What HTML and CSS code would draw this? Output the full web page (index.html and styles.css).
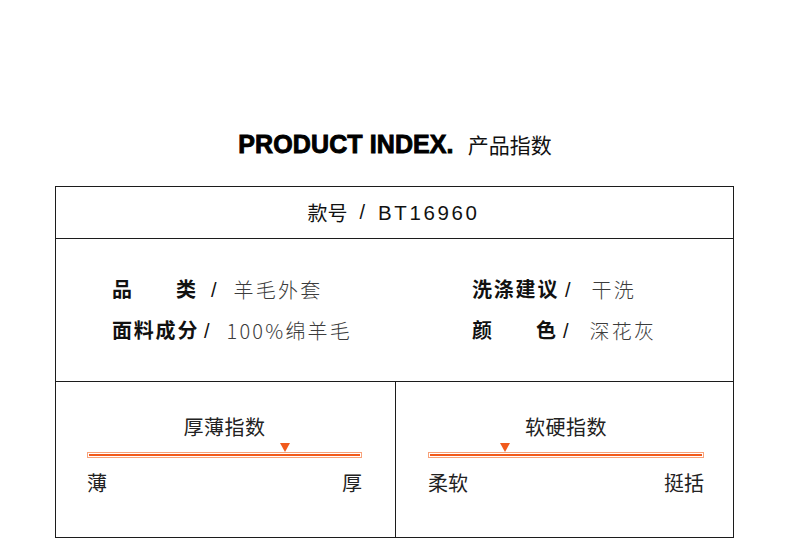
FILE: index.html
```html
<!DOCTYPE html>
<html lang="zh">
<head>
<meta charset="utf-8">
<title>Product Index</title>
<link rel="stylesheet" href="styles.css">
</head>
<body>
<div class="page">
  <h1 class="title">
    <span class="title-en">PRODUCT INDEX.</span>
    <span class="title-cn">产品指数</span>
  </h1>
  <div class="sheet">
    <div class="row-code">
      <span class="code-label">款号</span>
      <span class="code-slash">/</span>
      <span class="code-num">BT16960</span>
    </div>
    <div class="row-info">
      <div class="item item-shift">
        <span class="label spread"><span>品</span><span>类</span></span>
        <span class="slash">/</span>
        <span class="val">羊毛外套</span>
      </div>
      <div class="item item-right">
        <span class="label">洗涤建议</span>
        <span class="slash">/</span>
        <span class="val">干洗</span>
      </div>
      <div class="item">
        <span class="label">面料成分</span>
        <span class="slash">/</span>
        <span class="val">100%绵羊毛</span>
      </div>
      <div class="item item-right item-tight">
        <span class="label spread"><span>颜</span><span>色</span></span>
        <span class="slash">/</span>
        <span class="val">深花灰</span>
      </div>
    </div>
    <div class="row-gauges">
      <div class="panel panel-left">
        <div class="panel-title">厚薄指数</div>
        <div class="gauge">
          <div class="marker" style="left: 72%"></div>
          <div class="bar"><div class="bar-fill"></div></div>
        </div>
        <div class="ends"><span>薄</span><span>厚</span></div>
      </div>
      <div class="panel panel-right">
        <div class="panel-title">软硬指数</div>
        <div class="gauge">
          <div class="marker" style="left: 28%"></div>
          <div class="bar"><div class="bar-fill"></div></div>
        </div>
        <div class="ends"><span>柔软</span><span>挺括</span></div>
      </div>
    </div>
  </div>
</div>
</body>
</html>
```
FILE: styles.css
```css
* { box-sizing: border-box; }
html, body { margin: 0; padding: 0; background: #fff; }
body {
  font-family: "Liberation Sans", "Noto Sans CJK SC", sans-serif;
  color: #111;
  width: 790px;
}
.page { padding-top: 129px; }

.title {
  margin: 0 0 27px 0;
  height: 30px;
  line-height: 30px;
  display: flex;
  justify-content: center;
  align-items: baseline;
  gap: 14px;
  font-weight: normal;
}
.title-en {
  font-family: "Liberation Sans", sans-serif;
  font-weight: 700;
  font-size: 25px;
  -webkit-text-stroke: 0.9px #000;
  color: #000;
  letter-spacing: 0.1px;
}
.title-cn {
  font-family: "Noto Sans CJK SC", sans-serif;
  font-size: 21px;
  color: #111;
}

.sheet {
  margin-left: 55px;
  width: 679px;
  border: 1px solid #1c1c1c;
}

.row-code {
  height: 52px;
  border-bottom: 1px solid #1c1c1c;
  display: flex;
  align-items: center;
  justify-content: center;
  font-size: 20px;
  color: #111;
  padding-right: 2px;
}
.code-label { letter-spacing: 0; }
.code-slash { margin-left: 12px; }
.code-num { margin-left: 13px; letter-spacing: 2.6px; font-size: 20.5px; }

.row-info {
  height: 143px;
  border-bottom: 1px solid #1c1c1c;
  padding-left: 56px;
  display: grid;
  grid-template-columns: 360px 1fr;
  align-content: center;
  row-gap: 17px;
}
.item {
  display: flex;
  align-items: center;
  height: 24px;
  line-height: 24px;
  font-size: 20px;
}
.label {
  width: 86px;
  font-weight: 700;
  letter-spacing: 1.8px;
  color: #111;
  white-space: nowrap;
}
.label.spread {
  display: flex;
  justify-content: space-between;
  letter-spacing: 0;
  padding-right: 2px;
}
.slash {
  margin-left: 6px;
  font-family: "Liberation Sans", sans-serif;
  color: #111;
}
.val {
  margin-left: 17px;
  font-family: "Noto Sans CJK SC", sans-serif;
  font-weight: 300;
  color: #3c3c3c;
  letter-spacing: 2.2px;
}
.item-shift .slash { margin-left: 13px; }
.item-right .slash { margin-left: 7px; }
.item-right .val { margin-left: 21px; }
.item-tight .slash { margin-left: 5px; }

.row-gauges {
  height: 155px;
  display: grid;
  grid-template-columns: 340px 1fr;
}
.panel { display: flex; flex-direction: column; }
.panel-left { border-right: 1px solid #1c1c1c; padding: 0 33px 0 31px; }
.panel-right { padding: 0 29px 0 32px; }
.panel-title {
  margin-top: 34px;
  text-align: center;
  font-size: 20px;
  line-height: 24px;
  color: #222;
  letter-spacing: 0.5px;
}
.gauge {
  position: relative;
  padding-top: 12px;
}
.marker {
  position: absolute;
  top: 3px;
  width: 0;
  height: 0;
  margin-left: -5px;
  border-left: 5px solid transparent;
  border-right: 5px solid transparent;
  border-top: 9px solid #f15a1c;
}
.bar {
  height: 6px;
  border: 1px solid #f8a27a;
  padding: 1px;
  background: #fff;
}
.bar-fill {
  height: 2px;
  background: #f15a1c;
}
.ends {
  margin-top: 14px;
  display: flex;
  justify-content: space-between;
  font-size: 20px;
  line-height: 24px;
  color: #222;
}
```
